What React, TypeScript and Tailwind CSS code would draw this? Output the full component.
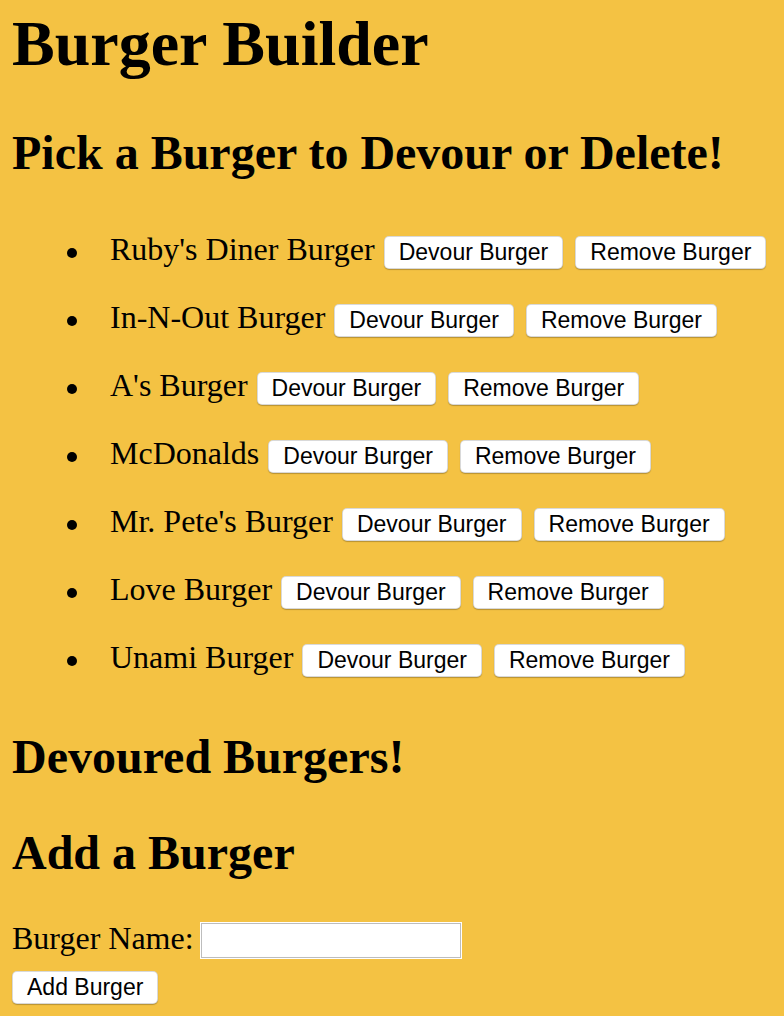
import React from 'react'

const BURGERS = [
  "Ruby's Diner Burger",
  'In-N-Out Burger',
  "A's Burger",
  'McDonalds',
  "Mr. Pete's Burger",
  'Love Burger',
  'Unami Burger'
]

const btn =
  "bg-white text-black text-[23px] leading-[26px] py-[2px] pb-[3px] px-[14px] rounded-[5px] border border-black/15 shadow-[0_1px_1px_rgba(0,0,0,0.25)] font-['Liberation_Sans',Arial,sans-serif]"

const BurgerRow = ({ name }: { name: string }) => (
  <li className="flex items-baseline h-[68px] leading-[68px]">
    <span className="self-start mt-[33px] ml-[55px] mr-[33px] w-[10px] h-[10px] rounded-full bg-black" />
    <span>{name}</span>
    <button className={btn + ' ml-[9px]'}>Devour Burger</button>
    <button className={btn + ' ml-[12px]'}>Remove Burger</button>
  </li>
)

export default function App() {
  return (
    <div className="min-h-screen bg-[#f4c243] text-black px-[12px] font-['Liberation_Serif',serif] text-[32px]">
      <h1 className="pt-[7px] text-[64px] leading-[74px] font-bold">Burger Builder</h1>

      <h2 className="mt-[44px] text-[48px] leading-[56px] font-bold">
        Pick a Burger to Devour or Delete!
      </h2>

      <ul className="mt-[34px]">
        {BURGERS.map((name) => (
          <BurgerRow key={name} name={name} />
        ))}
      </ul>

      <h2 className="mt-[38px] text-[48px] leading-[56px] font-bold">Devoured Burgers!</h2>

      <h2 className="mt-[40px] text-[48px] leading-[56px] font-bold">Add a Burger</h2>

      <form className="mt-[39px]" onSubmit={(e) => e.preventDefault()}>
        <div className="flex items-start">
          <label htmlFor="burger-name" className="leading-[37px]">
            Burger Name:
          </label>
          <input
            id="burger-name"
            type="text"
            className="ml-[7px] mt-[3px] w-[260px] h-[35px] bg-white border border-[#bdbdbd] shadow-[0_0_0_1px_#ffffff] outline-none"
          />
        </div>
        <button type="submit" className={btn + ' mt-[13px]'}>
          Add Burger
        </button>
      </form>
    </div>
  )
}
